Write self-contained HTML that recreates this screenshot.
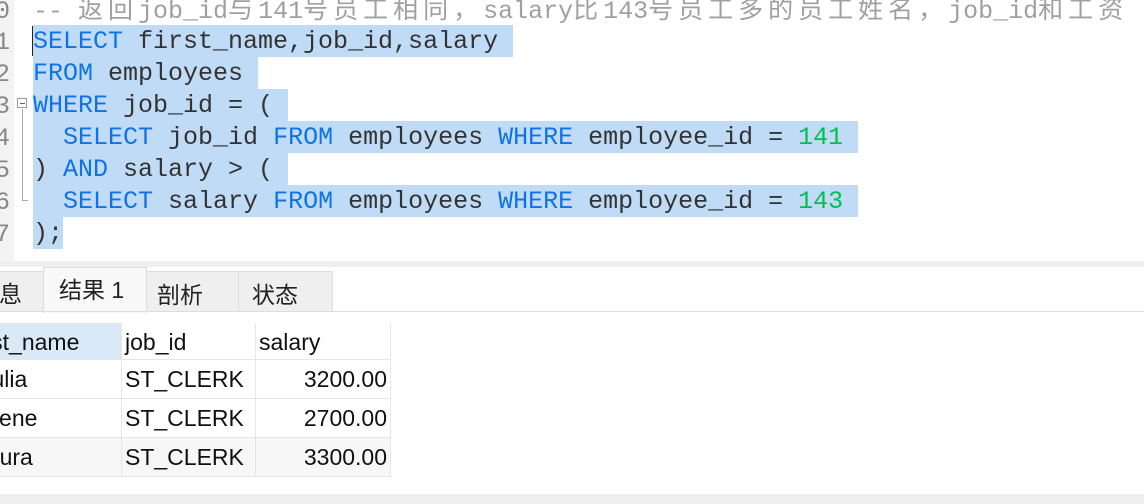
<!DOCTYPE html>
<html><head><meta charset="utf-8"><style>
*{margin:0;padding:0;box-sizing:border-box}
body{width:1144px;height:504px;overflow:hidden;background:#fff;position:relative;font-family:"Liberation Sans","Noto Sans CJK SC",sans-serif}
.gut{position:absolute;left:0;top:0;width:14px;height:261px;background:#f3f3f3}
.ln{position:absolute;left:-5px;font:25px/32px "Liberation Mono",monospace;color:#888}
.code{position:absolute;left:33px;font:25px/32px "Liberation Mono","Noto Sans CJK SC",monospace;color:#333;white-space:pre;height:32px}
.sel{background:#c0dbf6;display:inline-block;height:32px;line-height:34px;vertical-align:top}
.k{color:#0f72e6}.n{color:#00c050}.c{color:#a0a0a0}
.cj{letter-spacing:5px}
.band{position:absolute;left:0;top:261px;width:1144px;height:6px;background:#efefef}
.tab{position:absolute;font-size:23px;color:#222;border:1px solid #ddd;border-bottom:none;background:#efefef;padding-left:10px}
.tline{position:absolute;left:0;top:311px;width:1144px;height:1px;background:#ddd}
.cell{position:absolute;font-size:23px;color:#111;border-right:1px solid #e6e6e6;border-bottom:1px solid #e6e6e6;padding-left:3px;line-height:38px;white-space:nowrap}
.bot{position:absolute;left:0;top:494px;width:1144px;height:10px;background:#efefef}
</style></head><body>
<div class="gut"></div>
<div class="ln" style="top:-4px">0</div>
<div class="ln" style="top:27px">1</div>
<div class="ln" style="top:59px">2</div>
<div class="ln" style="top:91px">3</div>
<div class="ln" style="top:123px">4</div>
<div class="ln" style="top:155px">5</div>
<div class="ln" style="top:187px">6</div>
<div class="ln" style="top:219px">7</div>
<div style="position:absolute;left:17px;top:98px;width:10px;height:10px;border:1px solid #999;background:#fff"></div>
<div style="position:absolute;left:20px;top:103px;width:5px;height:1px;background:#666"></div>
<div style="position:absolute;left:22px;top:109px;width:1px;height:92px;background:#aaa"></div>
<div style="position:absolute;left:22px;top:200px;width:6px;height:1px;background:#aaa"></div>
<div class="code" style="top:-4px"><span class="c">-- <span class="cj">返回</span>job_id<span class="cj">与</span>141<span class="cj">号员工相同，</span>salary<span class="cj">比</span>143<span class="cj">号员工多的员工姓名，</span>job_id<span class="cj">和工资</span></span></div>
<div class="code" style="top:25px"><span class="sel"><span class="k">SELECT</span> first_name,job_id,salary </span></div>
<div class="code" style="top:57px"><span class="sel"><span class="k">FROM</span> employees </span></div>
<div class="code" style="top:89px"><span class="sel"><span class="k">WHERE</span> job_id = ( </span></div>
<div class="code" style="top:121px"><span class="sel">  <span class="k">SELECT</span> job_id <span class="k">FROM</span> employees <span class="k">WHERE</span> employee_id = <span class="n">141</span> </span></div>
<div class="code" style="top:153px"><span class="sel">) <span class="k">AND</span> salary &gt; ( </span></div>
<div class="code" style="top:185px"><span class="sel">  <span class="k">SELECT</span> salary <span class="k">FROM</span> employees <span class="k">WHERE</span> employee_id = <span class="n">143</span> </span></div>
<div class="code" style="top:217px"><span class="sel">);</span></div>
<div style="position:absolute;left:32px;top:26px;width:1px;height:30px;background:#222"></div>
<div class="band"></div>
<div class="tab" style="left:-12px;top:271px;width:56px;height:41px;line-height:44px">息</div>
<div class="tab" style="left:43px;top:267px;width:104px;height:46px;line-height:44px;background:#f8f8f8;padding-left:15px">结果 1</div>
<div class="tab" style="left:146px;top:271px;width:93px;height:41px;line-height:46px">剖析</div>
<div class="tab" style="left:238px;top:271px;width:95px;height:41px;line-height:46px;padding-left:13px">状态</div>
<div class="tline"></div>
<div class="cell" style="left:-40px;top:323px;width:162px;height:37px;background:#d9e9f8;padding-left:12px">first_name</div>
<div class="cell" style="left:122px;top:323px;width:134px;height:37px">job_id</div>
<div class="cell" style="left:256px;top:323px;width:135px;height:37px">salary</div>
<div class="cell" style="left:-40px;top:360px;width:162px;height:39px;padding-left:20px">Julia</div>
<div class="cell" style="left:122px;top:360px;width:134px;height:39px">ST_CLERK</div>
<div class="cell" style="left:256px;top:360px;width:135px;height:39px;text-align:right;padding-right:3px">3200.00</div>
<div class="cell" style="left:-40px;top:399px;width:162px;height:39px;padding-left:25px">Irene</div>
<div class="cell" style="left:122px;top:399px;width:134px;height:39px">ST_CLERK</div>
<div class="cell" style="left:256px;top:399px;width:135px;height:39px;text-align:right;padding-right:3px">2700.00</div>
<div class="cell" style="left:-40px;top:438px;width:162px;height:39px;padding-left:14px;background:#f7f7f7">Laura</div>
<div class="cell" style="left:122px;top:438px;width:134px;height:39px;background:#f7f7f7">ST_CLERK</div>
<div class="cell" style="left:256px;top:438px;width:135px;height:39px;text-align:right;padding-right:3px;background:#f7f7f7">3300.00</div>
<div class="bot"></div>
</body></html>
